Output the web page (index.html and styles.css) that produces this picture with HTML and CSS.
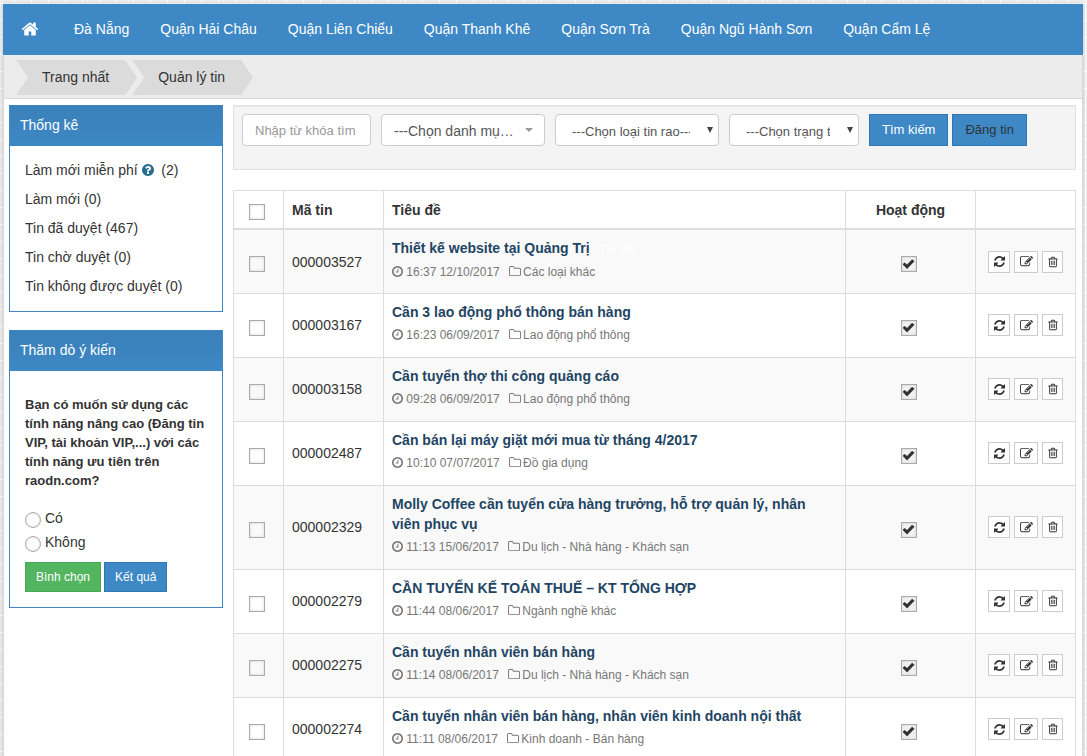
FILE: index.html
```html
<!DOCTYPE html>
<html lang="vi">
<head>
<meta charset="utf-8">
<title>Quản lý tin</title>
<link rel="stylesheet" href="styles.css">
</head>
<body>
<svg class="sprite" aria-hidden="true">
  <symbol id="home" viewBox="0 0 1792 1792"><path d="M1472 992v480q0 26-19 45t-45 19h-384v-384h-256v384h-384q-26 0-45-19t-19-45v-480q0-1 .5-3t.5-3l575-474 575 474q1 2 1 6zm223-69l-62 74q-8 9-21 11h-3q-13 0-21-7l-692-577-692 577q-12 8-24 7-13-2-21-11l-62-74q-8-10-7-23.5t11-21.5l719-599q32-26 76-26t76 26l244 204v-195q0-14 9-23t23-9h192q14 0 23 9t9 23v408l219 182q10 8 11 21.5t-7 23.5z"/></symbol>
  <symbol id="help" viewBox="128 0 1536 1792"><path d="M1024 1376v-192q0-14-9-23t-23-9h-192q-14 0-23 9t-9 23v192q0 14 9 23t23 9h192q14 0 23-9t9-23zm256-672q0-88-55.5-163t-138.5-116-170-41q-243 0-371 213-15 24 8 42l132 100q7 6 19 6 16 0 25-12 53-68 86-92 34-24 86-24 48 0 85.5 26t37.5 59q0 38-20 61t-68 45q-63 28-115.5 86.5t-52.5 125.5v36q0 14 9 23t23 9h192q14 0 23-9t9-23q0-19 21.5-49.5t54.5-49.5q32-18 49-28.5t46-35 44.5-48 28-60.5 12.5-81zm384 192q0 209-103 385.5t-279.5 279.5-385.5 103-385.5-103-279.5-279.5-103-385.5 103-385.5 279.5-279.5 385.5-103 385.5 103 279.5 279.5 103 385.5z"/></symbol>
  <symbol id="clock" viewBox="128 0 1536 1792"><path d="M1024 544v448q0 14-9 23t-23 9h-320q-14 0-23-9t-9-23v-64q0-14 9-23t23-9h224v-352q0-14 9-23t23-9h64q14 0 23 9t9 23zm416 352q0-148-73-273t-198-198-273-73-273 73-198 198-73 273 73 273 198 198 273 73 273-73 198-198 73-273zm224 0q0 209-103 385.5t-279.5 279.5-385.5 103-385.5-103-279.5-279.5-103-385.5 103-385.5 279.5-279.5 385.5-103 385.5 103 279.5 279.5 103 385.5z"/></symbol>
  <symbol id="folder" viewBox="64 0 1664 1792"><path d="M1600 1312v-704q0-40-28-68t-68-28h-704q-40 0-68-28t-28-68v-64q0-40-28-68t-68-28h-320q-40 0-68 28t-28 68v960q0 40 28 68t68 28h1216q40 0 68-28t28-68zm128-704v704q0 92-66 158t-158 66h-1216q-92 0-158-66t-66-158v-960q0-92 66-158t158-66h320q92 0 158 66t66 158v32h672q92 0 158 66t66 158z"/></symbol>
  <symbol id="refresh" viewBox="128 0 1536 1792"><path d="M1639 1056q0 5-1 7-64 268-268 434.5t-478 166.5q-146 0-282.5-55t-243.5-157l-129 129q-19 19-45 19t-45-19-19-45v-448q0-26 19-45t45-19h448q26 0 45 19t19 45-19 45l-137 137q71 66 161 102t187 36q134 0 250-65t186-179q11-17 53-117 8-23 30-23h192q13 0 22.5 9.5t9.5 22.5zm25-800v448q0 26-19 45t-45 19h-448q-26 0-45-19t-19-45 19-45l138-138q-148-137-349-137-134 0-250 65t-186 179q-11 17-53 117-8 23-30 23h-199q-13 0-22.5-9.5t-9.5-22.5v-7q65-268 270-434.5t480-166.5q146 0 284 55.5t245 156.5l130-129q19-19 45-19t45 19 19 45z"/></symbol>
  <symbol id="edit" viewBox="0 0 1792 1792"><path d="M888 1184l116-116-152-152-116 116v56h96v96h56zm440-720q-16-16-33 1l-350 350q-17 17-1 33t33-1l350-350q17-17 1-33zm80 594v190q0 119-84.5 203.5t-203.5 84.5h-832q-119 0-203.5-84.5t-84.5-203.5v-832q0-119 84.5-203.5t203.5-84.5h832q63 0 117 25 15 7 18 23 3 17-9 29l-49 49q-14 14-32 8-23-6-45-6h-832q-66 0-113 47t-47 113v832q0 66 47 113t113 47h832q66 0 113-47t47-113v-126q0-13 9-22l64-64q15-15 35-7t20 29zm-96-738l288 288-672 672h-288v-288zm444 132l-92 92-288-288 92-92q28-28 68-28t68 28l152 152q28 28 28 68t-28 68z"/></symbol>
  <symbol id="trash" viewBox="192 0 1408 1792"><path d="M704 736v576q0 14-9 23t-23 9h-64q-14 0-23-9t-9-23v-576q0-14 9-23t23-9h64q14 0 23 9t9 23zm256 0v576q0 14-9 23t-23 9h-64q-14 0-23-9t-9-23v-576q0-14 9-23t23-9h64q14 0 23 9t9 23zm256 0v576q0 14-9 23t-23 9h-64q-14 0-23-9t-9-23v-576q0-14 9-23t23-9h64q14 0 23 9t9 23zm128 724v-948h-896v948q0 22 7 40.5t14.5 27 10.5 8.5h832q3 0 10.5-8.5t14.5-27 7-40.5zm-672-1076h448l-48-117q-7-9-17-11h-317q-10 2-17 11zm928 32v64q0 14-9 23t-23 9h-96v948q0 83-47 143.5t-113 60.5h-832q-66 0-113-58.5t-47-141.5v-952h-96q-14 0-23-9t-9-23v-64q0-14 9-23t23-9h309l70-167q15-37 54-63t79-26h320q40 0 79 26t54 63l70 167h309q14 0 23 9t9 23z"/></symbol>
</svg>
<div class="page">
  <nav class="menu">
    <a class="menu-home" href="#" aria-label="Trang nhất"><svg class="icon-home"><use href="#home"/></svg></a>
    <a href="#">Đà Nẵng</a>
    <a href="#">Quận Hải Châu</a>
    <a href="#">Quận Liên Chiểu</a>
    <a href="#">Quận Thanh Khê</a>
    <a href="#">Quận Sơn Trà</a>
    <a href="#">Quận Ngũ Hành Sơn</a>
    <a href="#">Quận Cẩm Lệ</a>
  </nav>
  <div class="body">
    <div class="crumbs">
      <a href="#">Trang nhất</a>
      <a href="#">Quản lý tin</a>
    </div>
    <div class="columns">
      <aside class="sidebar">
        <section class="panel">
          <h2>Thống kê</h2>
          <ul class="stats">
            <li><a href="#">Làm mới miễn phí <svg class="icon-help"><use href="#help"/></svg></a>&nbsp; (2)</li>
            <li><a href="#">Làm mới (0)</a></li>
            <li><a href="#">Tin đã duyệt (467)</a></li>
            <li><a href="#">Tin chờ duyệt (0)</a></li>
            <li><a href="#">Tin không được duyệt (0)</a></li>
          </ul>
        </section>
        <section class="panel">
          <h2>Thăm dò ý kiến</h2>
          <form class="poll">
            <p>Bạn có muốn sử dụng các tính năng nâng cao (Đăng tin VIP, tài khoản VIP,...) với các tính năng ưu tiên trên raodn.com?</p>
            <label><input type="radio" name="poll"> Có</label>
            <label><input type="radio" name="poll"> Không</label>
            <div class="poll-actions">
              <button type="button" class="btn btn-small btn-green">Bình chọn</button>
              <button type="button" class="btn btn-small">Kết quả</button>
            </div>
          </form>
        </section>
      </aside>
      <main class="main">
        <form class="search">
          <input class="field keyword" type="text" placeholder="Nhập từ khóa tìm" aria-label="Nhập từ khóa tìm">
          <div class="pick pick-category"><select class="field" aria-label="Danh mục"><option>---Chọn danh mục---</option></select></div>
          <div class="pick pick-type"><select class="field" aria-label="Loại tin rao"><option>---Chọn loại tin rao---</option></select></div>
          <div class="pick pick-status"><select class="field" aria-label="Trạng thái"><option>---Chọn trạng thái---</option></select></div>
          <div class="search-actions">
            <button type="button" class="btn">Tìm kiếm</button>
            <a href="#" class="btn btn-post">Đăng tin</a>
          </div>
        </form>
        <table class="list">
          <colgroup><col class="col-check"><col class="col-code"><col><col class="col-active"><col class="col-tools"></colgroup>
          <thead>
            <tr><th class="tick"><input type="checkbox" aria-label="Chọn tất cả"></th><th>Mã tin</th><th>Tiêu đề</th><th class="center">Hoạt động</th><th></th></tr>
          </thead>
          <tbody>
            <tr>
              <td class="tick"><input type="checkbox" aria-label="Chọn 000003527"></td><td>000003527</td>
              <td><a class="title" href="#">Thiết kế website tại Quảng Trị</a><span class="vip">Tin VIP</span><div class="meta"><span><svg class="icon-clock"><use href="#clock"/></svg> 16:37 12/10/2017</span><span><svg class="icon-folder"><use href="#folder"/></svg> Các loại khác</span></div></td>
              <td class="tick"><input type="checkbox" checked aria-label="Hoạt động"></td>
              <td><div class="tools"><button type="button" aria-label="Làm mới"><svg class="icon-refresh"><use href="#refresh"/></svg></button><button type="button" aria-label="Sửa"><svg class="icon-edit"><use href="#edit"/></svg></button><button type="button" aria-label="Xóa"><svg class="icon-trash"><use href="#trash"/></svg></button></div></td>
            </tr>
            <tr>
              <td class="tick"><input type="checkbox" aria-label="Chọn 000003167"></td><td>000003167</td>
              <td><a class="title" href="#">Cần 3 lao động phổ thông bán hàng</a><div class="meta"><span><svg class="icon-clock"><use href="#clock"/></svg> 16:23 06/09/2017</span><span><svg class="icon-folder"><use href="#folder"/></svg> Lao động phổ thông</span></div></td>
              <td class="tick"><input type="checkbox" checked aria-label="Hoạt động"></td>
              <td><div class="tools"><button type="button" aria-label="Làm mới"><svg class="icon-refresh"><use href="#refresh"/></svg></button><button type="button" aria-label="Sửa"><svg class="icon-edit"><use href="#edit"/></svg></button><button type="button" aria-label="Xóa"><svg class="icon-trash"><use href="#trash"/></svg></button></div></td>
            </tr>
            <tr>
              <td class="tick"><input type="checkbox" aria-label="Chọn 000003158"></td><td>000003158</td>
              <td><a class="title" href="#">Cần tuyển thợ thi công quảng cáo</a><div class="meta"><span><svg class="icon-clock"><use href="#clock"/></svg> 09:28 06/09/2017</span><span><svg class="icon-folder"><use href="#folder"/></svg> Lao động phổ thông</span></div></td>
              <td class="tick"><input type="checkbox" checked aria-label="Hoạt động"></td>
              <td><div class="tools"><button type="button" aria-label="Làm mới"><svg class="icon-refresh"><use href="#refresh"/></svg></button><button type="button" aria-label="Sửa"><svg class="icon-edit"><use href="#edit"/></svg></button><button type="button" aria-label="Xóa"><svg class="icon-trash"><use href="#trash"/></svg></button></div></td>
            </tr>
            <tr>
              <td class="tick"><input type="checkbox" aria-label="Chọn 000002487"></td><td>000002487</td>
              <td><a class="title" href="#">Cần bán lại máy giặt mới mua từ tháng 4/2017</a><div class="meta"><span><svg class="icon-clock"><use href="#clock"/></svg> 10:10 07/07/2017</span><span><svg class="icon-folder"><use href="#folder"/></svg> Đồ gia dụng</span></div></td>
              <td class="tick"><input type="checkbox" checked aria-label="Hoạt động"></td>
              <td><div class="tools"><button type="button" aria-label="Làm mới"><svg class="icon-refresh"><use href="#refresh"/></svg></button><button type="button" aria-label="Sửa"><svg class="icon-edit"><use href="#edit"/></svg></button><button type="button" aria-label="Xóa"><svg class="icon-trash"><use href="#trash"/></svg></button></div></td>
            </tr>
            <tr>
              <td class="tick"><input type="checkbox" aria-label="Chọn 000002329"></td><td>000002329</td>
              <td><a class="title" href="#">Molly Coffee cần tuyển cửa hàng trưởng, hỗ trợ quản lý, nhân viên phục vụ</a><div class="meta"><span><svg class="icon-clock"><use href="#clock"/></svg> 11:13 15/06/2017</span><span><svg class="icon-folder"><use href="#folder"/></svg> Du lịch - Nhà hàng - Khách sạn</span></div></td>
              <td class="tick"><input type="checkbox" checked aria-label="Hoạt động"></td>
              <td><div class="tools"><button type="button" aria-label="Làm mới"><svg class="icon-refresh"><use href="#refresh"/></svg></button><button type="button" aria-label="Sửa"><svg class="icon-edit"><use href="#edit"/></svg></button><button type="button" aria-label="Xóa"><svg class="icon-trash"><use href="#trash"/></svg></button></div></td>
            </tr>
            <tr>
              <td class="tick"><input type="checkbox" aria-label="Chọn 000002279"></td><td>000002279</td>
              <td><a class="title" href="#">CẦN TUYỂN KẾ TOÁN THUẾ – KT TỔNG HỢP</a><div class="meta"><span><svg class="icon-clock"><use href="#clock"/></svg> 11:44 08/06/2017</span><span><svg class="icon-folder"><use href="#folder"/></svg> Ngành nghề khác</span></div></td>
              <td class="tick"><input type="checkbox" checked aria-label="Hoạt động"></td>
              <td><div class="tools"><button type="button" aria-label="Làm mới"><svg class="icon-refresh"><use href="#refresh"/></svg></button><button type="button" aria-label="Sửa"><svg class="icon-edit"><use href="#edit"/></svg></button><button type="button" aria-label="Xóa"><svg class="icon-trash"><use href="#trash"/></svg></button></div></td>
            </tr>
            <tr>
              <td class="tick"><input type="checkbox" aria-label="Chọn 000002275"></td><td>000002275</td>
              <td><a class="title" href="#">Cần tuyển nhân viên bán hàng</a><div class="meta"><span><svg class="icon-clock"><use href="#clock"/></svg> 11:14 08/06/2017</span><span><svg class="icon-folder"><use href="#folder"/></svg> Du lịch - Nhà hàng - Khách sạn</span></div></td>
              <td class="tick"><input type="checkbox" checked aria-label="Hoạt động"></td>
              <td><div class="tools"><button type="button" aria-label="Làm mới"><svg class="icon-refresh"><use href="#refresh"/></svg></button><button type="button" aria-label="Sửa"><svg class="icon-edit"><use href="#edit"/></svg></button><button type="button" aria-label="Xóa"><svg class="icon-trash"><use href="#trash"/></svg></button></div></td>
            </tr>
            <tr>
              <td class="tick"><input type="checkbox" aria-label="Chọn 000002274"></td><td>000002274</td>
              <td><a class="title" href="#">Cần tuyển nhân viên bán hàng, nhân viên kinh doanh nội thất</a><div class="meta"><span><svg class="icon-clock"><use href="#clock"/></svg> 11:11 08/06/2017</span><span><svg class="icon-folder"><use href="#folder"/></svg> Kinh doanh - Bán hàng</span></div></td>
              <td class="tick"><input type="checkbox" checked aria-label="Hoạt động"></td>
              <td><div class="tools"><button type="button" aria-label="Làm mới"><svg class="icon-refresh"><use href="#refresh"/></svg></button><button type="button" aria-label="Sửa"><svg class="icon-edit"><use href="#edit"/></svg></button><button type="button" aria-label="Xóa"><svg class="icon-trash"><use href="#trash"/></svg></button></div></td>
            </tr>
          </tbody>
        </table>
      </main>
    </div>
  </div>
</div>
</body>
</html>
```
FILE: styles.css
```css
* { box-sizing: border-box; }

html { scrollbar-width: none; }

body {
  margin: 0;
  padding: 4px 4px 0 3px;
  background-color: #eee;
  background-image:
    linear-gradient(90deg, #fff 1px, transparent 1px),
    linear-gradient(#fff 1px, transparent 1px);
  background-size: 17px 17px;
  background-position: 14px 3px;
  color: #333;
  font: 14px/20px "Liberation Sans", Arial, sans-serif;
}

a { color: inherit; text-decoration: none; }
button, input, select { font-family: inherit; }
svg { fill: currentColor; }

.sprite { display: none; }

.page { box-shadow: 0 0 4px rgba(0, 0, 0, .2); }

.menu {
  display: flex;
  align-items: center;
  height: 51px;
  padding-bottom: 2px;
  background: #3d88c5;
  color: #fff;
}
.menu a { padding: 0 16px 0 15px; white-space: nowrap; }
.menu .menu-home { padding: 0 20px 0 18px; }
.icon-home { display: block; width: 18px; height: 18px; }

.body {
  border: 1px solid #d9d9d9;
  border-top: 0;
  background: #fff;
}

.crumbs {
  display: flex;
  padding: 5px 12px 3px;
  border-bottom: 1px solid #d9d9d9;
  background: #ececec;
}
.crumbs a {
  padding: 0 28px 0 26px;
  background: #dbdbdb;
  line-height: 35px;
  clip-path: polygon(0 0, calc(100% - 12px) 0, 100% 50%, calc(100% - 12px) 100%, 0 100%, 12px 50%);
}
.crumbs a + a { margin-left: -5px; }

.columns {
  display: flex;
  gap: 10px;
  padding: 6px 6px 0 5px;
}
.sidebar { flex: 0 0 214px; }
.main { flex: 1; min-width: 0; }

.panel {
  margin-bottom: 18px;
  border: 1px solid #3d88c5;
}
.panel h2 {
  margin: 0;
  padding: 9px 10px 11px;
  background: linear-gradient(#3b80ba, #3d88c5);
  color: #fff;
  font-size: 14px;
  font-weight: normal;
}
.stats {
  margin: 0;
  padding: 10px 15px;
  list-style: none;
  line-height: 29px;
}
.icon-help {
  width: 12px;
  height: 14px;
  color: #2a6d8f;
  vertical-align: -2px;
}

.poll { padding: 24px 15px 15px; }
.poll p {
  margin: 0 0 16px;
  font-size: 13px;
  font-weight: bold;
  line-height: 19px;
}
.poll label {
  display: flex;
  gap: 4px;
  line-height: 24px;
}
.poll-actions { display: flex; gap: 3px; margin-top: 8px; }

input[type="radio"], input[type="checkbox"] {
  appearance: none;
  width: 16px;
  height: 16px;
  margin: 0;
  border: 1px solid #aaa;
  background: transparent;
  box-shadow: inset 0 0 3px rgba(0, 0, 0, .15);
}
input[type="radio"] { margin-top: 6px; border-radius: 50%; }
input[type="checkbox"] { display: block; margin: 5px auto 0; }
input[type="checkbox"]:checked { background: #f2f2f2; }
input[type="checkbox"]:checked::before {
  content: "";
  display: block;
  width: 12px;
  height: 10px;
  margin: 2px 1px;
  background: #333;
  clip-path: polygon(0 52%, 18% 35%, 38% 56%, 80% 3%, 100% 22%, 38% 100%);
}

.btn {
  display: block;
  height: 32px;
  padding: 0 12px;
  border: 1px solid #2d77b5;
  background: #3d88c5;
  color: #fff;
  font-size: 13px;
  line-height: 30px;
  white-space: nowrap;
}
.btn-small { height: 30px; padding: 0 10px; font-size: 12px; line-height: 28px; }
.btn-green { border-color: #45a955; background: #54b560; }
.btn-post { color: #333; }

.search {
  display: flex;
  gap: 10px;
  margin-bottom: 20px;
  padding: 8px 8px 23px;
  border: 1px solid #e1e1e1;
  background: #f4f4f4;
  box-shadow: inset 0 1px 1px rgba(0, 0, 0, .05);
}
.search-actions { display: flex; gap: 4px; }
.field {
  width: 100%;
  height: 32px;
  border: 1px solid #ccc;
  border-radius: 4px;
  background: #fff;
  color: #555;
  font-size: 13px;
}
.keyword { width: 129px; padding: 0 12px; }
.keyword::placeholder { color: #999; }
.pick { position: relative; width: 164px; }
.pick-status { width: 130px; }
.pick select {
  appearance: none;
  padding: 2px 28px 0 16px;
  text-overflow: clip;
}
.pick-category select {
  padding: 2px 29px 0 12px;
  font-size: 14px;
  text-overflow: ellipsis;
}
.pick::after {
  content: "";
  position: absolute;
  top: 13px;
  right: 6px;
  width: 6px;
  height: 6px;
  background: #444;
  clip-path: polygon(0 0, 100% 0, 50% 100%);
  pointer-events: none;
}
.pick-category::after {
  top: 14px;
  right: 12px;
  width: 8px;
  height: 4px;
  background: #999;
}

.list {
  width: 100%;
  table-layout: fixed;
  border-collapse: collapse;
}
.col-check { width: 50px; }
.col-code { width: 100px; }
.col-active { width: 130px; }
.col-tools { width: 100px; }
.list th, .list td {
  padding: 8px;
  border: 1px solid #ddd;
  text-align: left;
}
.list td { padding-bottom: 9px; }
.list tbody tr:first-child td { padding-bottom: 8px; }
.list th { border-bottom-width: 2px; }
.list .center { text-align: center; }
.list .tick { padding-right: 12px; }
.list tbody tr:nth-child(odd) { background: #f9f9f9; }
.title { color: #1f4564; font-weight: bold; }
.vip {
  margin-left: 7px;
  padding: 0 3px;
  color: #fff;
  font-size: 11px;
  font-weight: bold;
}
.meta {
  display: flex;
  gap: 9px;
  margin: 3px 0;
  color: #777;
  font-size: 12px;
}
.icon-clock { width: 11px; height: 13px; vertical-align: -2px; }
.icon-folder { width: 12px; height: 13px; vertical-align: -2px; }
.icon-folder, .icon-clock { margin-right: -1px; }
.icon-clock { margin-right: 0; }

.tools { display: flex; gap: 4px; padding-left: 4px; }
.tools button {
  display: flex;
  align-items: center;
  justify-content: center;
  width: 22px;
  height: 22px;
  padding: 0;
  border: 1px solid #ccc;
  background: #fff;
  color: #333;
}
.tools button:nth-child(2) { width: 24px; }
.tools button:nth-child(3) { width: 21px; }
.icon-refresh { width: 11px; height: 13px; }
.icon-edit { width: 13px; height: 13px; }
.icon-trash { width: 10px; height: 12px; }
```
